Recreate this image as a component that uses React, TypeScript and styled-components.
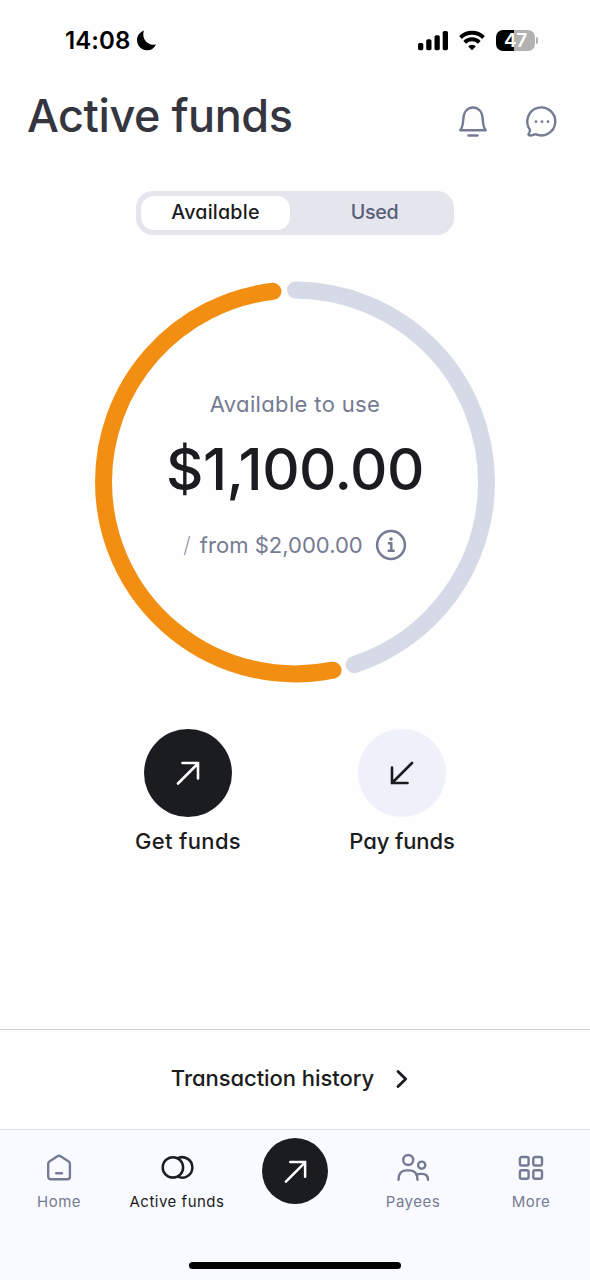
import React from "react";
import styled, { createGlobalStyle } from "styled-components";

const ink = "#1b1c20";
const muted = "#757b92";

const GlobalStyle = createGlobalStyle`
  * { box-sizing: border-box; }
  body { margin: 0; background: #fff; font-family: Inter, "Liberation Sans", sans-serif; }
  button { border: 0; padding: 0; background: none; font: inherit; color: inherit; cursor: pointer; }
  svg { display: block; flex: none; overflow: visible; }
`;

const Screen = styled.div`
  display: flex;
  flex-direction: column;
  width: 590px;
  height: 1280px;
  background: #fefefe;
  color: ${ink};
  overflow: hidden;
`;

const Label = styled.span<{ $size: number; $weight?: number; $track?: number; $color?: string }>`
  display: block;
  white-space: nowrap;
  font-feature-settings: "cv11" 1;
  font-size: ${(p) => p.$size}px;
  font-weight: ${(p) => p.$weight ?? 500};
  letter-spacing: ${(p) => p.$track ?? 0}px;
  color: ${(p) => p.$color ?? ink};
`;

const StatusBar = styled.div`
  display: flex;
  justify-content: space-between;
  align-items: center;
  height: 81px;
  padding: 0 52px 0 65px;
`;

const StatusGroup = styled.div<{ $gap: number }>`
  display: flex;
  align-items: center;
  gap: ${(p) => p.$gap}px;
`;

const Time = styled.span`
  width: 66px;
  font-size: 24px;
  font-weight: 600;
  letter-spacing: 0.1px;
  color: #000;
`;

const Battery = styled.div`
  display: flex;
  align-items: center;
  gap: 1px;
`;

const BatteryLevel = styled.div`
  display: flex;
  align-items: center;
  justify-content: center;
  width: 39px;
  height: 21px;
  border-radius: 7px;
  background: linear-gradient(90deg, #000 47%, #b2b2b2 47%);
  color: #fff;
  font-size: 19px;
  line-height: 21px;
  font-weight: 600;
  letter-spacing: -0.3px;
`;

const BatteryTip = styled.div`
  width: 2px;
  height: 7px;
  border-radius: 0 2px 2px 0;
  background: #b2b2b2;
`;

const Header = styled.header`
  display: flex;
  justify-content: space-between;
  align-items: flex-start;
  height: 110px;
  padding: 7px 32px 0 27px;
`;

const Title = styled.h1`
  margin: 0;
  line-height: 56px;
`;

const HeaderActions = styled.div`
  display: flex;
  gap: 39px;
  padding-top: 18px;
`;

const Segments = styled.div`
  display: flex;
  align-self: center;
  width: 318px;
  height: 44px;
  padding: 5px;
  border-radius: 17px;
  background: #e5e6ed;
`;

const Segment = styled.button<{ $active?: boolean }>`
  display: flex;
  flex: none;
  justify-content: center;
  align-items: center;
  width: ${(p) => (p.$active ? 149 : 159)}px;
  margin-left: ${(p) => (p.$active ? 0 : 5)}px;
  height: 34px;
  padding-bottom: 3px;
  border-radius: 13px;
  background: ${(p) => (p.$active ? "#fff" : "transparent")};
`;

const Gauge = styled.section`
  display: grid;
  align-self: center;
  margin-top: 46px;
  width: 402px;
  height: 402px;
  > * { grid-area: 1 / 1; }
`;

const GaugeText = styled.div`
  display: flex;
  flex-direction: column;
  align-items: center;
  padding-top: 108px;
`;

const Caption = styled.div`
  line-height: 30px;
`;

const Amount = styled.div`
  margin-top: 14px;
  line-height: 72px;
`;

const Limit = styled.div`
  display: flex;
  align-items: center;
  gap: 12px;
  margin-top: 24px;
  line-height: 30px;
`;

const Slash = styled.span`
  font-weight: 200;
  margin-right: 3px;
`;

const Actions = styled.div`
  display: flex;
  align-self: center;
  justify-content: space-between;
  margin-top: 46px;
  width: 321px;
`;

const Action = styled.button`
  display: flex;
  flex-direction: column;
  align-items: center;
  gap: 9px;
  width: 107px;
  line-height: 30px;
`;

const Disc = styled.span<{ $size: number; $light?: boolean }>`
  display: flex;
  align-items: center;
  justify-content: center;
  width: ${(p) => p.$size}px;
  height: ${(p) => p.$size}px;
  border-radius: 50%;
  background: ${(p) => (p.$light ? "#eef1fa" : ink)};
  color: ${(p) => (p.$light ? ink : "#fff")};
`;

const History = styled.button`
  display: flex;
  justify-content: center;
  align-items: center;
  gap: 22px;
  margin-top: auto;
  height: 100px;
  padding: 0 11px 3px 0;
  border-top: 1px solid #cfd0d4;
`;

const Nav = styled.nav`
  display: flex;
  flex-direction: column;
  align-items: center;
  height: 151px;
  border-top: 1px solid #dfe0e8;
  background: #f9faff;
`;

const Tabs = styled.div`
  display: grid;
  grid-template-columns: repeat(5, 118px);
  height: 132px;
`;

const Tab = styled.button<{ $active?: boolean }>`
  display: flex;
  flex-direction: column;
  align-items: center;
  align-self: start;
  gap: 8px;
  padding-top: 22px;
  font-size: 15px;
  line-height: 20px;
  letter-spacing: 0.5px;
  white-space: nowrap;
  color: ${(p) => (p.$active ? ink : muted)};
`;

const CenterTab = styled.button`
  display: flex;
  justify-content: center;
  align-self: start;
  padding-top: 8px;
`;

const HomeIndicator = styled.div`
  width: 212px;
  height: 7px;
  border-radius: 4px;
  background: #000;
`;

const Arrow = ({ down, size = 26 }: { down?: boolean; size?: number }) => (
  <svg width={size} height={size} viewBox="0 0 26 26" fill="none" stroke="currentColor" strokeWidth="2.6" strokeLinecap="round" strokeLinejoin="miter">
    {down ? <path d="M23 3 3 23M3 7.500v15.500h15.500" /> : <path d="M3 23.500 23 3.500M7.500 3h15.500v15.500" />}
  </svg>
);

const Moon = () => (
  <svg width="20" height="21" viewBox="0 0 20 21">
    <path d="M6.800.5C2.700 2.300 0 5.800 0 10.100c0 5.800 4.400 10.200 10.100 10.200 4.100 0 7.400-2.400 8.900-6.100-1.200.4-2.200.5-3.200.5C10.800 14.700 6.500 10.300 6.300 5.100c0-1.700.1-3.100.5-4.600Z" />
  </svg>
);

const Signal = () => (
  <svg width="31" height="20" viewBox="0 0 31 20">
    <rect x="0" y="12" width="5.300" height="7.200" rx="1.600" />
    <rect x="8.200" y="8.300" width="5.300" height="10.900" rx="1.600" />
    <rect x="16.500" y="4.300" width="5.300" height="14.900" rx="1.600" />
    <rect x="24.700" y="0" width="5.300" height="19.200" rx="1.600" />
  </svg>
);

const Wifi = () => (
  <svg width="27" height="20" viewBox="0 0 27 20" fill="none" stroke="#000" strokeWidth="3.900">
    <path d="M1.500 6.500a16.300 16.300 0 0 1 23 0" />
    <path d="M5.700 11.300a10.300 10.300 0 0 1 14.600 0" />
    <path d="m13 19.200-3.900-3.900a5.600 5.600 0 0 1 7.800 0Z" fill="#000" stroke="none" />
  </svg>
);

const Bell = () => (
  <svg width="28" height="32" viewBox="0 0 28 32" fill="none" stroke={muted} strokeWidth="2.400" strokeLinecap="round" strokeLinejoin="round">
    <path d="M1.300 24.200c1.700-2.200 2.700-5.700 2.900-10.200C4.500 6.300 8.300 1.500 14 1.500s9.500 4.800 9.800 12.500c.2 4.500 1.200 8 2.900 10.200Z" />
    <path d="M9.500 29.500h9" />
  </svg>
);

const Chat = () => (
  <svg width="32" height="32" viewBox="0 0 32 32" fill="none">
    <path d="M3.700 23.300A14 14 0 1 1 9.500 28.200c-2 .6-4 1.600-6 1.200-1.200-.2-1.200-1.200-.5-2 .8-1.100 1.400-2.500.7-4.100Z" stroke={muted} strokeWidth="2.400" strokeLinejoin="round" />
    <g fill={muted}>
      <circle cx="10" cy="15.700" r="1.400" />
      <circle cx="16" cy="15.700" r="1.400" />
      <circle cx="22" cy="15.700" r="1.400" />
    </g>
  </svg>
);

const Info = () => (
  <svg width="32" height="32" viewBox="0 0 32 32" fill="none" stroke={muted} strokeWidth="2.500">
    <circle cx="16" cy="16" r="13.900" />
    <path d="M12.800 14.200h3.500V21.500M12.700 21.800h7" strokeWidth="2.400" />
    <circle cx="16" cy="10.100" r="1.800" fill={muted} stroke="none" />
  </svg>
);

const Ring = () => (
  <svg width="402" height="402" viewBox="0 0 402 402" fill="none" strokeWidth="17" strokeLinecap="round">
    <path d="M201.500 9A192 192 0 0 1 392.500 201A192 192 0 0 1 260.300 383.600" stroke="#d6d9e6" />
    <path d="M179 10.300A192 192 0 0 0 9.500 201A192 192 0 0 0 239 389.200" stroke="#f28f13" />
  </svg>
);

const HomeIcon = () => (
  <svg width="32" height="32" viewBox="0 0 32 32" fill="none" stroke="currentColor" strokeWidth="2.400" strokeLinecap="round" strokeLinejoin="round">
    <path d="M5.200 11.800c0-1 .4-1.700 1.200-2.300l8.100-5.300c1-.7 2.100-.7 3.100 0l8.100 5.300c.8.600 1.200 1.300 1.200 2.300v12.800c0 1.700-1 2.700-2.700 2.700H7.900c-1.700 0-2.700-1-2.700-2.700Z" />
    <path d="M13.200 21.200h5.700" />
  </svg>
);

const FundsIcon = () => (
  <svg width="32" height="32" viewBox="0 0 32 32" fill="none" stroke="currentColor" strokeWidth="2.500" strokeLinecap="round">
    <circle cx="11.900" cy="15.400" r="10.200" />
    <path d="M17 6.100a10.200 10.200 0 1 1 0 18.600" />
  </svg>
);

const PayeesIcon = () => (
  <svg width="32" height="32" viewBox="0 0 32 32" fill="none" stroke="currentColor" strokeWidth="2.400" strokeLinecap="round" strokeLinejoin="round">
    <circle cx="11.200" cy="8" r="5" />
    <circle cx="24.700" cy="13.200" r="3.600" />
    <path d="M1.500 27.700c0-6 3-9.300 8-9.300h3c5 0 8 3.300 8 9.300" />
    <path d="M19.500 22.900c.9-.7 2.500-1 4.200-1h1.200c3.900 0 6.100 2.200 6.100 5.800" />
  </svg>
);

const MoreIcon = () => (
  <svg width="32" height="32" viewBox="0 0 32 32" fill="none" stroke="currentColor" strokeWidth="2.400">
    <rect x="4.900" y="5" width="8.700" height="8.500" rx="1.800" />
    <rect x="18.300" y="5" width="8.700" height="8.500" rx="1.800" />
    <rect x="4.900" y="18.200" width="8.700" height="8.500" rx="1.800" />
    <rect x="18.300" y="18.200" width="8.700" height="8.500" rx="1.800" />
  </svg>
);

export default function App() {
  return (
    <Screen>
      <GlobalStyle />
      <StatusBar>
        <StatusGroup $gap={6}>
          <Time>14:08</Time>
          <Moon />
        </StatusGroup>
        <StatusGroup $gap={10}>
          <Signal />
          <Wifi />
          <Battery>
            <BatteryLevel>47</BatteryLevel>
            <BatteryTip />
          </Battery>
        </StatusGroup>
      </StatusBar>
      <Header>
        <Title>
          <Label $size={45} $weight={550} $track={-0.45} $color="#34353f">Active funds</Label>
        </Title>
        <HeaderActions>
          <Bell />
          <Chat />
        </HeaderActions>
      </Header>
      <Segments>
        <Segment $active>
          <Label $size={19.7} $track={0.2}>Available</Label>
        </Segment>
        <Segment>
          <Label $size={19.7} $track={-0.3} $color="#585f78">Used</Label>
        </Segment>
      </Segments>
      <Gauge>
        <Ring />
        <GaugeText>
          <Caption>
            <Label $size={22} $weight={400} $track={0.35} $color={muted}>Available to use</Label>
          </Caption>
          <Amount>
            <Label $size={58} $weight={550} $track={-0.5}>$1,100.00</Label>
          </Amount>
          <Limit>
            <Label $size={22} $weight={400} $track={0.02} $color={muted}><Slash>/</Slash> from $2,000.00</Label>
            <Info />
          </Limit>
        </GaugeText>
      </Gauge>
      <Actions>
        <Action>
          <Disc $size={88}><Arrow /></Disc>
          <Label $size={22} $track={0.35}>Get funds</Label>
        </Action>
        <Action>
          <Disc $size={88} $light><Arrow down /></Disc>
          <Label $size={22} $track={-0.1}>Pay funds</Label>
        </Action>
      </Actions>
      <History>
        <Label $size={22} $track={-0.05}>Transaction history</Label>
        <svg width="12" height="20" viewBox="0 0 12 20" fill="none" stroke={ink} strokeWidth="2.800" strokeLinecap="round" strokeLinejoin="round">
          <path d="m2 3.500 7.700 7.500-7.700 7.500" />
        </svg>
      </History>
      <Nav>
        <Tabs>
          <Tab><HomeIcon />Home</Tab>
          <Tab $active><FundsIcon />Active funds</Tab>
          <CenterTab aria-label="Get funds">
            <Disc $size={66}><Arrow size={25} /></Disc>
          </CenterTab>
          <Tab><PayeesIcon />Payees</Tab>
          <Tab><MoreIcon />More</Tab>
        </Tabs>
        <HomeIndicator />
      </Nav>
    </Screen>
  );
}
